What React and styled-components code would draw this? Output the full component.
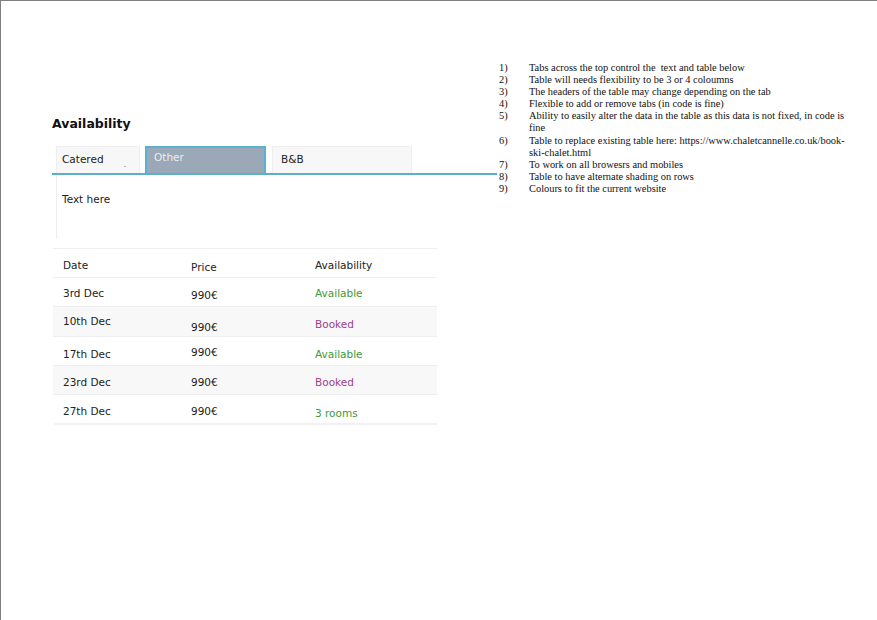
import styled, { createGlobalStyle } from "styled-components";

const GlobalStyle = createGlobalStyle`
  body {
    margin: 0;
    background: #ffffff;
  }
`;

const Sheet = styled.div`
  width: 877px;
  height: 620px;
  box-sizing: border-box;
  border-top: 1px solid #808080;
  border-left: 1px solid #808080;
  display: flex;
  align-items: flex-start;
  font-family: "DejaVu Sans", Verdana, sans-serif;
  color: #333333;
`;

const WidgetColumn = styled.div`
  width: 445px;
  margin-left: 51px;
  padding-top: 115px;
`;

const Title = styled.h2`
  margin: 0;
  font-size: 12.5px;
  line-height: 15px;
  font-weight: bold;
  color: #111111;
`;

const TabBar = styled.div`
  display: flex;
  gap: 5px;
  margin-top: 15px;
  padding-left: 4px;
  border-bottom: 2px solid #5aafcb;
`;

const Tab = styled.button`
  position: relative;
  box-sizing: border-box;
  width: ${(p) => p.$width}px;
  height: 27px;
  margin-right: ${(p) => (p.$gap ? p.$gap : 0)}px;
  padding: ${(p) => (p.$active ? "2px 7px 0" : `5px ${p.$pad}px 0`)};
  display: flex;
  align-items: flex-start;
  font-family: inherit;
  font-size: 10.5px;
  line-height: 14px;
  text-align: left;
  cursor: pointer;
  background: ${(p) => (p.$active ? "#9aa8b7" : "#f7f7f7")};
  color: ${(p) => (p.$active ? "#e9eef2" : "#222222")};
  border: ${(p) => (p.$active ? "2px solid #5ab2cf" : "1px solid #efefef")};
  border-bottom: none;
`;

const TabMark = styled.span`
  position: absolute;
  right: 13px;
  bottom: 6px;
  width: 2px;
  height: 1px;
  background: #b5b5b5;
`;

const Panel = styled.div`
  margin-left: 4px;
  height: 64px;
  padding: 18px 5px 0;
  box-sizing: border-box;
  border-left: 1px solid #eeeeee;
  font-size: 10.5px;
  color: #222222;
`;

const Table = styled.div`
  width: 384px;
  margin: 9px 0 0 1px;
  border-bottom: 2px solid #f1f1f1;
`;

const Row = styled.div`
  display: grid;
  grid-template-columns: 128px 124px 1fr;
  height: ${(p) => p.$height}px;
  box-sizing: border-box;
  border-top: 1px solid #eeeeee;
  background: ${(p) => (p.$shaded ? "#f8f8f8" : "#ffffff")};
`;

const Cell = styled.div`
  padding: ${(p) => 8 + (p.$nudge || 0)}px 10px 0;
  font-size: 10.5px;
  line-height: 14px;
  color: ${(p) =>
    p.$status === "ok" ? "#3c9a3c" : p.$status === "booked" ? "#9b3f8d" : "#222222"};
`;

const NotesColumn = styled.ol`
  margin: 0;
  padding: 61px 0 0 1px;
  list-style: none;
  font-family: "Liberation Serif", "Times New Roman", serif;
  font-size: 10.4px;
  line-height: 12px;
  color: #111111;
`;

const Note = styled.li`
  display: flex;
  margin-bottom: ${(p) => (p.$wrap ? 1 : 0)}px;
`;

const NoteNum = styled.span`
  width: 30px;
  flex-shrink: 0;
  padding-left: 1px;
`;

const NoteText = styled.span`
  width: 322px;
`;

const tabs = [
  { label: "Catered", width: 84, gap: 0, pad: 5, mark: true },
  { label: "Other", width: 121, gap: 1, active: true },
  { label: "B&B", width: 140, gap: 0, pad: 8 },
];

const rows = [
  { date: "3rd Dec", price: "990€", avail: "Available", status: "ok", nudge: [0, 2, 0] },
  { date: "10th Dec", price: "990€", avail: "Booked", status: "booked", shaded: true, nudge: [-1, 5, 2] },
  { date: "17th Dec", price: "990€", avail: "Available", status: "ok", nudge: [2, 0, 2] },
  { date: "23rd Dec", price: "990€", avail: "Booked", status: "booked", shaded: true, nudge: [1, 1, 1] },
  { date: "27th Dec", price: "990€", avail: "3 rooms", status: "ok", nudge: [1, 1, 3] },
];

const notes = [
  "Tabs across the top control the \u00a0text and table below",
  "Table will needs flexibility to be 3 or 4 coloumns",
  "The headers of the table may change depending on the tab",
  "Flexible to add or remove tabs (in code is fine)",
  "Ability to easily alter the data in the table as this data is not fixed, in code is fine",
  "Table to replace existing table here: https://www.chaletcannelle.co.uk/book-ski-chalet.html",
  "To work on all browesrs and mobiles",
  "Table to have alternate shading on rows",
  "Colours to fit the current website",
];

const App = () => {
  return (
    <>
      <GlobalStyle />
      <Sheet>
        <WidgetColumn>
          <Title>Availability</Title>
          <TabBar>
            {tabs.map((tab) => (
              <Tab
                key={tab.label}
                $width={tab.width}
                $gap={tab.gap}
                $pad={tab.pad}
                $active={tab.active}
              >
                {tab.label}
                {tab.mark && <TabMark />}
              </Tab>
            ))}
          </TabBar>
          <Panel>Text here</Panel>
          <Table>
            <Row $height={29}>
              <Cell $nudge={1}>Date</Cell>
              <Cell $nudge={3}>Price</Cell>
              <Cell $nudge={1}>Availability</Cell>
            </Row>
            {rows.map((row, i) => (
              <Row key={row.date} $height={i === 1 ? 30 : 29} $shaded={row.shaded}>
                <Cell $nudge={row.nudge[0]}>{row.date}</Cell>
                <Cell $nudge={row.nudge[1]}>{row.price}</Cell>
                <Cell $nudge={row.nudge[2]} $status={row.status}>
                  {row.avail}
                </Cell>
              </Row>
            ))}
          </Table>
        </WidgetColumn>
        <NotesColumn>
          {notes.map((note, i) => (
            <Note key={i} $wrap={i === 4}>
              <NoteNum>{i + 1})</NoteNum>
              <NoteText>{note}</NoteText>
            </Note>
          ))}
        </NotesColumn>
      </Sheet>
    </>
  );
};

export default App;
